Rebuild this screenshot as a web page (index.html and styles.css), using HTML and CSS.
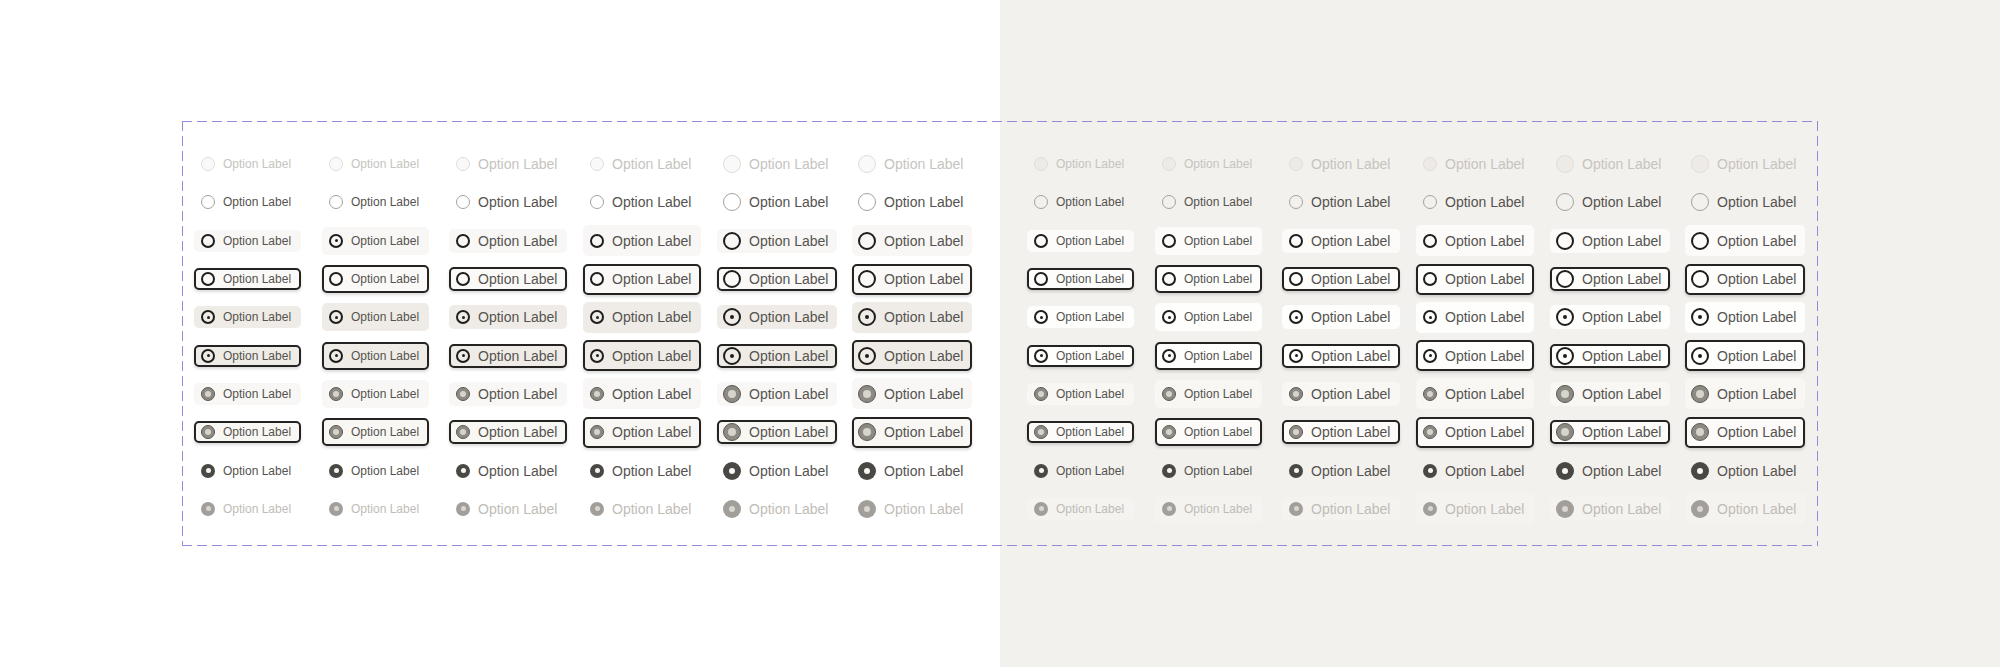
FILE: index.html
```html
<!DOCTYPE html>
<html lang="en">

<head>
    <meta charset="UTF-8">
    <meta name="viewport" content="width=device-width, initial-scale=1.0">
    <title>Radio option states</title>
    <link rel="stylesheet" href="styles.css">
</head>

<body>
    <div class="frame">
        <!-- on white -->
        <div class="group light">
            <div class="col s">
                <label class="opt disabled"><span class="radio"></span>Option Label</label>
                <label class="opt"><span class="radio"></span>Option Label</label>
                <label class="opt hover"><span class="radio"></span>Option Label</label>
                <label class="opt hover focus"><span class="radio"></span>Option Label</label>
                <label class="opt checked"><span class="radio"></span>Option Label</label>
                <label class="opt checked focus"><span class="radio"></span>Option Label</label>
                <label class="opt pressed"><span class="radio"></span>Option Label</label>
                <label class="opt pressed focus"><span class="radio"></span>Option Label</label>
                <label class="opt on"><span class="radio"></span>Option Label</label>
                <label class="opt disabled on"><span class="radio"></span>Option Label</label>
            </div>
            <div class="col s tall">
                <label class="opt disabled"><span class="radio"></span>Option Label</label>
                <label class="opt"><span class="radio"></span>Option Label</label>
                <label class="opt hover dot"><span class="radio"></span>Option Label</label>
                <label class="opt hover focus"><span class="radio"></span>Option Label</label>
                <label class="opt checked"><span class="radio"></span>Option Label</label>
                <label class="opt checked focus"><span class="radio"></span>Option Label</label>
                <label class="opt pressed"><span class="radio"></span>Option Label</label>
                <label class="opt pressed focus"><span class="radio"></span>Option Label</label>
                <label class="opt on"><span class="radio"></span>Option Label</label>
                <label class="opt disabled on"><span class="radio"></span>Option Label</label>
            </div>
            <div class="col m">
                <label class="opt disabled"><span class="radio"></span>Option Label</label>
                <label class="opt"><span class="radio"></span>Option Label</label>
                <label class="opt hover"><span class="radio"></span>Option Label</label>
                <label class="opt hover focus"><span class="radio"></span>Option Label</label>
                <label class="opt checked"><span class="radio"></span>Option Label</label>
                <label class="opt checked focus"><span class="radio"></span>Option Label</label>
                <label class="opt pressed"><span class="radio"></span>Option Label</label>
                <label class="opt pressed focus"><span class="radio"></span>Option Label</label>
                <label class="opt on"><span class="radio"></span>Option Label</label>
                <label class="opt disabled on"><span class="radio"></span>Option Label</label>
            </div>
            <div class="col m tall">
                <label class="opt disabled"><span class="radio"></span>Option Label</label>
                <label class="opt"><span class="radio"></span>Option Label</label>
                <label class="opt hover"><span class="radio"></span>Option Label</label>
                <label class="opt hover focus"><span class="radio"></span>Option Label</label>
                <label class="opt checked"><span class="radio"></span>Option Label</label>
                <label class="opt checked focus"><span class="radio"></span>Option Label</label>
                <label class="opt pressed"><span class="radio"></span>Option Label</label>
                <label class="opt pressed focus"><span class="radio"></span>Option Label</label>
                <label class="opt on"><span class="radio"></span>Option Label</label>
                <label class="opt disabled on"><span class="radio"></span>Option Label</label>
            </div>
            <div class="col l">
                <label class="opt disabled"><span class="radio"></span>Option Label</label>
                <label class="opt"><span class="radio"></span>Option Label</label>
                <label class="opt hover"><span class="radio"></span>Option Label</label>
                <label class="opt hover focus"><span class="radio"></span>Option Label</label>
                <label class="opt checked"><span class="radio"></span>Option Label</label>
                <label class="opt checked focus"><span class="radio"></span>Option Label</label>
                <label class="opt pressed"><span class="radio"></span>Option Label</label>
                <label class="opt pressed focus"><span class="radio"></span>Option Label</label>
                <label class="opt on"><span class="radio"></span>Option Label</label>
                <label class="opt disabled on"><span class="radio"></span>Option Label</label>
            </div>
            <div class="col l tall">
                <label class="opt disabled"><span class="radio"></span>Option Label</label>
                <label class="opt"><span class="radio"></span>Option Label</label>
                <label class="opt hover"><span class="radio"></span>Option Label</label>
                <label class="opt hover focus"><span class="radio"></span>Option Label</label>
                <label class="opt checked"><span class="radio"></span>Option Label</label>
                <label class="opt checked focus"><span class="radio"></span>Option Label</label>
                <label class="opt pressed"><span class="radio"></span>Option Label</label>
                <label class="opt pressed focus"><span class="radio"></span>Option Label</label>
                <label class="opt on"><span class="radio"></span>Option Label</label>
                <label class="opt disabled on"><span class="radio"></span>Option Label</label>
            </div>
        </div>

        <!-- on beige -->
        <div class="group tint">
            <div class="col s">
                <label class="opt disabled"><span class="radio"></span>Option Label</label>
                <label class="opt"><span class="radio"></span>Option Label</label>
                <label class="opt hover"><span class="radio"></span>Option Label</label>
                <label class="opt hover focus"><span class="radio"></span>Option Label</label>
                <label class="opt checked"><span class="radio"></span>Option Label</label>
                <label class="opt checked focus"><span class="radio"></span>Option Label</label>
                <label class="opt pressed"><span class="radio"></span>Option Label</label>
                <label class="opt pressed focus"><span class="radio"></span>Option Label</label>
                <label class="opt on"><span class="radio"></span>Option Label</label>
                <label class="opt disabled on"><span class="radio"></span>Option Label</label>
            </div>
            <div class="col s tall">
                <label class="opt disabled"><span class="radio"></span>Option Label</label>
                <label class="opt"><span class="radio"></span>Option Label</label>
                <label class="opt hover"><span class="radio"></span>Option Label</label>
                <label class="opt hover focus"><span class="radio"></span>Option Label</label>
                <label class="opt checked"><span class="radio"></span>Option Label</label>
                <label class="opt checked focus"><span class="radio"></span>Option Label</label>
                <label class="opt pressed"><span class="radio"></span>Option Label</label>
                <label class="opt pressed focus"><span class="radio"></span>Option Label</label>
                <label class="opt on"><span class="radio"></span>Option Label</label>
                <label class="opt disabled on"><span class="radio"></span>Option Label</label>
            </div>
            <div class="col m">
                <label class="opt disabled"><span class="radio"></span>Option Label</label>
                <label class="opt"><span class="radio"></span>Option Label</label>
                <label class="opt hover"><span class="radio"></span>Option Label</label>
                <label class="opt hover focus"><span class="radio"></span>Option Label</label>
                <label class="opt checked"><span class="radio"></span>Option Label</label>
                <label class="opt checked focus"><span class="radio"></span>Option Label</label>
                <label class="opt pressed"><span class="radio"></span>Option Label</label>
                <label class="opt pressed focus"><span class="radio"></span>Option Label</label>
                <label class="opt on"><span class="radio"></span>Option Label</label>
                <label class="opt disabled on"><span class="radio"></span>Option Label</label>
            </div>
            <div class="col m tall">
                <label class="opt disabled"><span class="radio"></span>Option Label</label>
                <label class="opt"><span class="radio"></span>Option Label</label>
                <label class="opt hover"><span class="radio"></span>Option Label</label>
                <label class="opt hover focus"><span class="radio"></span>Option Label</label>
                <label class="opt checked"><span class="radio"></span>Option Label</label>
                <label class="opt checked focus"><span class="radio"></span>Option Label</label>
                <label class="opt pressed"><span class="radio"></span>Option Label</label>
                <label class="opt pressed focus"><span class="radio"></span>Option Label</label>
                <label class="opt on"><span class="radio"></span>Option Label</label>
                <label class="opt disabled on"><span class="radio"></span>Option Label</label>
            </div>
            <div class="col l">
                <label class="opt disabled"><span class="radio"></span>Option Label</label>
                <label class="opt"><span class="radio"></span>Option Label</label>
                <label class="opt hover"><span class="radio"></span>Option Label</label>
                <label class="opt hover focus"><span class="radio"></span>Option Label</label>
                <label class="opt checked"><span class="radio"></span>Option Label</label>
                <label class="opt checked focus"><span class="radio"></span>Option Label</label>
                <label class="opt pressed"><span class="radio"></span>Option Label</label>
                <label class="opt pressed focus"><span class="radio"></span>Option Label</label>
                <label class="opt on"><span class="radio"></span>Option Label</label>
                <label class="opt disabled on"><span class="radio"></span>Option Label</label>
            </div>
            <div class="col l tall">
                <label class="opt disabled"><span class="radio"></span>Option Label</label>
                <label class="opt"><span class="radio"></span>Option Label</label>
                <label class="opt hover"><span class="radio"></span>Option Label</label>
                <label class="opt hover focus"><span class="radio"></span>Option Label</label>
                <label class="opt checked"><span class="radio"></span>Option Label</label>
                <label class="opt checked focus"><span class="radio"></span>Option Label</label>
                <label class="opt pressed"><span class="radio"></span>Option Label</label>
                <label class="opt pressed focus"><span class="radio"></span>Option Label</label>
                <label class="opt on"><span class="radio"></span>Option Label</label>
                <label class="opt disabled on"><span class="radio"></span>Option Label</label>
            </div>
        </div>
    </div>
</body>

</html>
```

FILE: styles.css
```css
* {
    box-sizing: border-box;
}

body {
    margin: 0;
    min-height: 100vh;
    background: linear-gradient(90deg, #ffffff 50%, #f3f1ed 50%);
    font-family: "Liberation Sans", Arial, sans-serif;
}

/* dashed purple frame round both groups */
div.frame {
    display: flex;
    justify-content: space-between;
    width: 1636px;
    margin: 121px auto 0;
    padding: 24px 12px 18px;
    background-image:
        repeating-linear-gradient(90deg, #9c85dc 0 10px, transparent 10px 15px),
        repeating-linear-gradient(90deg, #9c85dc 0 10px, transparent 10px 15px),
        repeating-linear-gradient(180deg, #9c85dc 0 10px, transparent 10px 15px),
        repeating-linear-gradient(180deg, #9c85dc 0 10px, transparent 10px 15px);
    background-size: 100% 1px, 100% 1px, 1px 100%, 1px 100%;
    background-position: top left, bottom left, top left, top right;
    background-repeat: no-repeat;
}

.group {
    display: grid;
    grid-template-columns: 128px 127px 134px 134px 135px 121px;
}

.group.light {
    --hover: #f8f7f5;
    --focus: #faf9f7;
    --checked: #efece7;
    --pressed: #f8f7f5;
    --pressed-focus: #f8f7f4;
    --faint: transparent;
}

.group.tint {
    --hover: #fcfbfa;
    --focus: #fdfdfc;
    --checked: #fefefd;
    --pressed: #f8f7f4;
    --pressed-focus: #fcfbfa;
    --faint: #f5f3f0;
}

.col {
    display: grid;
    grid-auto-rows: 38.3px;
    align-items: center;
    justify-items: start;
}

.opt {
    display: inline-flex;
    align-items: center;
    gap: 8px;
    padding: 0 8px 0 5px;
    border: 2px solid transparent;
    border-radius: 5px;
    color: #55534f;
    white-space: nowrap;
    cursor: pointer;
}

.s .opt {
    font-size: 12px;
    height: 22px;
}

.s.tall .opt {
    height: 28px;
}

.m .opt,
.l .opt {
    font-size: 14px;
    height: 24px;
}

.m.tall .opt,
.l.tall .opt {
    height: 31px;
}

.l .opt {
    padding: 0 7px 0 4px;
}

.radio {
    display: grid;
    place-items: center;
    flex: none;
    width: 14px;
    height: 14px;
    border: 1px solid #a5a29d;
    border-radius: 50%;
}

.l .radio {
    width: 18px;
    height: 18px;
}

.radio::after {
    content: "";
    border-radius: 50%;
}

/* states, one per row */
.opt.disabled {
    color: #c6c4c0;
}

.opt.disabled .radio {
    border-color: #e0deda;
    background: rgba(120, 110, 90, 0.04);
}

.opt.hover {
    background: var(--hover);
}

.opt.hover .radio,
.opt.checked .radio {
    border: 2px solid #1f1e1c;
}

.opt.focus {
    border-color: #242321;
    background: var(--focus);
    box-shadow: 0 2px 3px rgba(0, 0, 0, 0.14);
}

.opt.checked {
    background: var(--checked);
}

.opt.checked .radio::after,
.opt.dot .radio::after {
    width: 3px;
    height: 3px;
    background: #1f1e1c;
}

.l .opt.checked .radio::after {
    width: 4px;
    height: 4px;
}

.opt.pressed {
    background: var(--pressed);
}

.opt.pressed.focus {
    background: var(--pressed-focus);
}

.opt.pressed .radio {
    border: 1.5px solid #5c5955;
    background: #8d8983;
}

.opt.pressed .radio::after {
    width: 6px;
    height: 6px;
    background: #d7d4ce;
}

.l .opt.pressed .radio::after {
    width: 8px;
    height: 8px;
}

.opt.on .radio {
    border: none;
    background: #4a4845;
}

.opt.on .radio::after {
    width: 5px;
    height: 5px;
    background: #f6f5f3;
}

.l .opt.on .radio::after {
    width: 6px;
    height: 6px;
}

.opt.disabled.on {
    color: #bfbcb7;
    background: var(--faint);
}

.opt.disabled.on .radio {
    background: #a29f9a;
}

.opt.disabled.on .radio::after {
    background: #d9d6d1;
}
```
